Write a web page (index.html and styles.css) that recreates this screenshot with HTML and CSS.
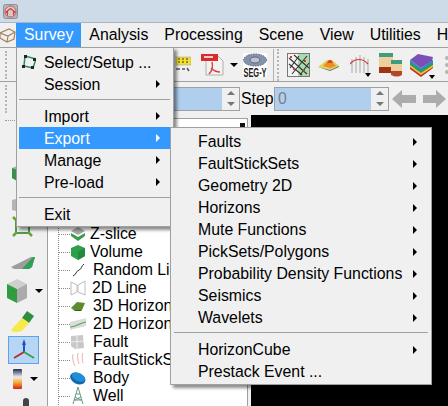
FILE: index.html
```html
<!DOCTYPE html>
<html lang="en">
<head>
    <meta charset="UTF-8" />
    <title>OpendTect</title>
    <link rel="stylesheet" href="styles.css">
</head>
<body>
    <header class="titlebar">
        <svg width="15" height="15" viewBox="0 0 15 15"><rect x="0.5" y="0.5" width="14" height="14" rx="2" fill="#b4b4b4" stroke="#909090"/><circle cx="7.5" cy="7.5" r="5.5" fill="#d8c8c8" stroke="#a86a6a"/><path d="M2.5 8.5l5-4 5 4M4.5 7.5v4M10.5 7.5v4" fill="none" stroke="#d83a3a" stroke-width="1.1"/></svg>
    </header>
    <nav class="menubar">
        <svg class="cubeicon" width="16" height="15" viewBox="0 0 16 15"><path d="M0 5l9-4 6 3-1 7-7 3-7-4z M0 5l8 3 7-4 M8 8l-1 6" fill="none" stroke="#a5835e" stroke-width="1.2"/></svg>
        <span class="menu-title active">Survey</span>
        <span class="menu-title">Analysis</span>
        <span class="menu-title">Processing</span>
        <span class="menu-title">Scene</span>
        <span class="menu-title">View</span>
        <span class="menu-title">Utilities</span>
        <span class="menu-title">Help</span>
    </nav>
    <div class="toolbar">
        <div class="grip"></div>
        <svg class="t-ruler" width="24" height="17" viewBox="0 0 24 17"><rect x="9" y="1" width="15" height="8" fill="#f4e02c" stroke="#999" stroke-width=".5"/><path d="M11 3h2M15 3h2M19 3h2M11 6h2M15 6h2M19 6h2" stroke="#333"/><path d="M9 13h4M15 13h3M20 12l2 3" stroke="#555" stroke-width="1.5"/></svg>
        <svg class="t-pdf" width="23" height="23" viewBox="0 0 23 23"><path d="M5 3h12l5 5v14H5z" fill="#f2f2f2" stroke="#b0b0b0"/><rect x="0" y="1" width="17" height="7" fill="#d92b2b"/><path d="M3 3h9v2H3z" fill="#f6caca"/><path d="M8 21c3-3 4-8 3-12M10 15c3 3 5 4 9 4" fill="none" stroke="#d83c3c" stroke-width="1.4"/></svg>
        <span class="drop-arrow t-arrow"></span>
        <svg class="t-segy" width="24" height="24" viewBox="0 0 24 24"><rect width="24" height="24" fill="#fff"/><ellipse cx="12" cy="7" rx="11.5" ry="6" fill="#8592ab" stroke="#4f5d78" stroke-dasharray="1.5 1"/><ellipse cx="12" cy="7" rx="5" ry="3" fill="#bcc4d4" stroke="#667"/><text class="segy-text" transform="translate(12 23.5) scale(.62 1)">SEG-Y</text></svg>
        <div class="handle"></div>
        <svg class="t-grid" width="23" height="24" viewBox="0 0 23 24"><rect x=".5" y=".5" width="22" height="23" fill="#a8dcae" stroke="#777"/><rect x="1" y="1" width="10" height="22" fill="#f4f4f4"/><path d="M2 5l18 16M7 2l15 13M2 11l13 11M20 3L5 21M12 3L3 15M22 10L13 22" stroke="#333" stroke-width="1.1"/><rect x="3" y="3" width="2" height="2" fill="#d33"/><rect x="17" y="7" width="2" height="2" fill="#d33"/><rect x="6" y="15" width="2" height="2" fill="#d33"/><rect x="16" y="17" width="2" height="2" fill="#d33"/></svg>
        <svg class="t-surface" width="21" height="12" viewBox="0 0 21 12"><path d="M0 8l9-7h5l7 6-9 4z" fill="#dcd54f"/><path d="M5 7l5-5h3l5 5-6 2z" fill="#ef8b2d"/><path d="M9 4l2-3h2l2 3z" fill="#e33b2e"/><path d="M0 8l12 3 9-4v1l-9 4z" fill="#6e6e6e"/></svg>
        <div class="t-wells">
            <svg width="19" height="21" viewBox="0 0 19 21"><path d="M2 5v14M6 3v16M10 1v18M14 3v16M18 5v14" stroke="#bdbdbd" stroke-width="1.4"/><path d="M0 10c5-6 13-6 18 0" fill="none" stroke="#d23a3a" stroke-width="1.2"/></svg>
            <span class="drop-arrow small"></span>
        </div>
        <svg class="t-section" width="24" height="24" viewBox="0 0 24 24"><path d="M1 0h14v4H1z" fill="#3f9c7c"/><path d="M1 4h14v10H1z" fill="#efcf9d"/><path d="M1 14h14v6H1z" fill="#9d3514"/><path d="M13 7h11v4H13z" fill="#3f9c7c"/><path d="M13 11h11v7H13z" fill="#efcf9d"/><path d="M13 18h11v4q-5 3-11 0z" fill="#b5462a"/></svg>
        <div class="t-wells t-stack">
            <svg width="23" height="24" viewBox="0 0 23 24"><path d="M0 13l11 8 12-8v2L11 24 0 16z" fill="#c62b2b"/><path d="M0 11l11 8 12-8v3L11 22 0 14z" fill="#f2c530"/><path d="M0 9l11 8 12-8v3L11 20 0 12z" fill="#2f9c4f"/><path d="M0 7l11 8 12-8v3L11 18 0 10z" fill="#2b8fb0"/><path d="M0 7l8-6 15 3-1 4-11 7z" fill="#7a50b8"/></svg>
            <span class="drop-arrow small"></span>
        </div>
        <svg class="t-dots" width="4" height="20" viewBox="0 0 4 20"><circle cx="3" cy="3" r="2" fill="#b5b5b5"/><circle cx="3" cy="10" r="2" fill="#b5b5b5"/><circle cx="3" cy="17" r="2" fill="#b5b5b5"/></svg>
    </div>
    <div class="sliderbar">
        <div class="grip"></div>
        <div class="spin first">
            <span class="spin-value"></span>
            <span class="spin-btns"><i class="up"></i><i class="down"></i></span>
        </div>
        <span class="step-label">Step</span>
        <div class="spin">
            <span class="spin-value">0</span>
            <span class="spin-btns"><i class="up"></i><i class="down"></i></span>
        </div>
        <svg class="nav-left" width="24" height="18" viewBox="0 0 24 18"><path d="M0 9L10 0v5h14v8H10v5z" fill="#acacac"/></svg>
        <svg class="nav-right" width="23" height="18" viewBox="0 0 23 18"><path d="M23 9L13 0v5H0v8h13v5z" fill="#acacac"/></svg>
    </div>
    <div class="workarea">
        <aside class="sidetools">
            <div class="side-grip"></div>
            <svg class="s-a" width="16" height="16" viewBox="0 0 16 16"><path d="M0 3l8-3 8 3v10l-8 3-8-3z" fill="#a8a8a8"/><path d="M0 3l5 2v11l-5-3z" fill="#3c8f4a"/></svg>
            <svg class="s-b" width="16" height="14" viewBox="0 0 16 14"><path d="M0 2l8-2 8 2v10l-8 2-8-2z" fill="#b5b5b5"/></svg>
            <svg class="s-box" width="21" height="21" viewBox="0 0 21 21"><rect x="4" y="4" width="13" height="13" fill="#e9f3e9" stroke="#4f9a4f" stroke-width="2"/><path d="M1 1l4 4M20 1l-4 4M1 20l4-4M20 20l-4-4" stroke="#6aa33c" stroke-width="2.5"/></svg>
            <svg class="s-slab" width="24" height="12" viewBox="0 0 24 12"><path d="M0 10L20 0h4l-3 10-3 2H3z" fill="#9d9d9d"/><path d="M11 12L22 0h2l-3 10-3 2z" fill="#2fa056"/></svg>
            <div class="side-row s-cube"><svg width="20" height="24" viewBox="0 0 20 24"><path d="M0 5l10-5 10 5-10 5z" fill="#cfcfcf"/><path d="M0 5l10 5v14L0 19z" fill="#2f9c3f"/><path d="M20 5l-10 5v14l10-5z" fill="#ababab"/></svg><span class="drop-arrow"></span></div>
            <svg class="s-flash" width="24" height="22" viewBox="0 0 24 22"><path d="M16 0l7 5-5 7-7-5z" fill="#2f8f3f"/><path d="M11 7l7 5-7 8C5 22 0 21 0 19z" fill="#f6e94a"/></svg>
            <div class="axis-btn"><svg width="24" height="24" viewBox="0 0 24 24"><path d="M12 14V4" stroke="#2257b5" stroke-width="2"/><path d="M10 7l2-6 2 6z" fill="#2257b5"/><path d="M12 14L2 20" stroke="#b03030" stroke-width="2"/><path d="M12 14l10 6" stroke="#3c9c55" stroke-width="2"/></svg></div>
            <div class="side-row s-ramp"><svg width="9" height="20" viewBox="0 0 9 20"><defs><linearGradient id="ramp" x1="0" y1="0" x2="0" y2="1"><stop offset="0" stop-color="#222a55"/><stop offset=".4" stop-color="#eee"/><stop offset=".7" stop-color="#f3a12c"/><stop offset="1" stop-color="#d41f1f"/></linearGradient></defs><rect width="9" height="20" rx="1" fill="url(#ramp)"/></svg><span class="drop-arrow"></span></div>
            <svg class="s-lock" width="10" height="8" viewBox="0 0 10 8"><path d="M2 8V3a3 3 0 0 1 6 0v5z" fill="#444"/></svg>
        </aside>
        <section class="tree">
            <div class="tree-head"><span></span></div>
            <div class="tree-list">
                <div class="tree-row near"><svg width="16" height="16" viewBox="0 0 16 16"><path d="M1 5l7-4 7 4-7 4z" fill="#a8a8a8"/><path d="M1 7l7 4 7-4v3l-7 5-7-5z" fill="#3c9c4a"/></svg>Z-slice</div>
                <div class="tree-row near"><svg width="16" height="16" viewBox="0 0 16 16"><path d="M8 1l7 3v8l-7 4-7-4V4z" fill="#2fa04a"/><path d="M8 8l7-4v8l-7 4z" fill="#238a3c"/></svg>Volume</div>
                <div class="tree-row"><svg width="16" height="16" viewBox="0 0 16 16"><path d="M3 14c3-1 3-5 6-6s2-4 5-6" fill="none" stroke="#333"/></svg>Random Line</div>
                <div class="tree-row mid"><svg width="16" height="16" viewBox="0 0 16 16"><path d="M1 2l6 3v7l-6 3zM15 1L8 5v7l7 3z" fill="none" stroke="#bbb"/></svg>2D Line</div>
                <div class="tree-row"><svg width="16" height="16" viewBox="0 0 16 16"><path d="M1 10l6-6 8 1-3 7H5z" fill="#5c8c2c"/><path d="M1 10l4 2h7l-1 1H5z" fill="#37591a"/></svg>3D Horizon</div>
                <div class="tree-row"><svg width="16" height="16" viewBox="0 0 16 16"><path d="M0 6l16-4v8L0 14z" fill="#dcdcdc"/><path d="M0 11c6 0 9-4 16-5" fill="none" stroke="#57a35a" stroke-width="1.2"/></svg>2D Horizon</div>
                <div class="tree-row"><svg width="16" height="16" viewBox="0 0 16 16"><path d="M1 2l12-1 1 13-9 1-4-3z" fill="#c8c8c8"/><path d="M7 1v14M1 8l13-1" stroke="#eee"/></svg>Fault</div>
                <div class="tree-row"><svg width="16" height="16" viewBox="0 0 16 16"><path d="M3 2c-1 4 0 8 2 12M8 1c-1 4 0 8 1 11M13 1c-1 3-1 6 0 10" fill="none" stroke="#efb0b0"/></svg>FaultStickSets</div>
                <div class="tree-row"><svg width="16" height="16" viewBox="0 0 16 16"><ellipse cx="8" cy="8.5" rx="8" ry="5.5" transform="rotate(25 8 8)" fill="#1468ad"/><ellipse cx="8" cy="7" rx="7" ry="4" transform="rotate(25 8 8)" fill="#1f8fd8"/></svg>Body</div>
                <div class="tree-row"><svg width="16" height="18" viewBox="0 0 16 18"><path d="M8 0L3 17M8 0l5 17M4 13h8M6 7h4M5 10l6 3M11 10l-6 3" fill="none" stroke="#6a9a80"/></svg>Well</div>
            </div>
        </section>
        <div class="canvas"></div>
    </div>

    <div class="popup survey-menu">
        <div class="item"><svg class="item-icon" width="14" height="14" viewBox="0 0 14 14"><path d="M3 1l11 3-3 9-9-2z" fill="none" stroke="#2f8f5f" stroke-width="1.5"/><g fill="#222"><rect x="2" y="0" width="3" height="3"/><rect x="11" y="3" width="3" height="3"/><rect x="9" y="11" width="3" height="3"/><rect x="0" y="10" width="3" height="3"/></g></svg>Select/Setup ...</div>
        <div class="item sub">Session</div>
        <div class="sep"></div>
        <div class="item sub">Import</div>
        <div class="item sub selected">Export</div>
        <div class="item sub">Manage</div>
        <div class="item sub">Pre-load</div>
        <div class="sep"></div>
        <div class="item">Exit</div>
    </div>

    <div class="popup export-menu">
        <div class="item sub">Faults</div>
        <div class="item sub">FaultStickSets</div>
        <div class="item sub">Geometry 2D</div>
        <div class="item sub">Horizons</div>
        <div class="item sub">Mute Functions</div>
        <div class="item sub">PickSets/Polygons</div>
        <div class="item sub">Probability Density Functions</div>
        <div class="item sub">Seismics</div>
        <div class="item sub">Wavelets</div>
        <div class="sep"></div>
        <div class="item sub">HorizonCube</div>
        <div class="item">Prestack Event ...</div>
    </div>
</body>
</html>
```

FILE: styles.css
```css
html {
    font: 15.85px/1.2 "Liberation Sans", Arial, sans-serif;
}

body {
    margin: 0;
    width: 448px;
    height: 406px;
    overflow: hidden;
    position: relative;
    background-color: #f0f0f0;
    color: #000;
}

svg {
    flex: none;
    display: block;
}

.titlebar {
    display: flex;
    align-items: center;
    box-sizing: border-box;
    height: 23px;
    padding: 0 3px;
    background-color: #cddbe9;
    border-bottom: 1px solid #a9b5c0;
}

.menubar {
    display: flex;
    align-items: center;
    height: 24px;
    overflow: hidden;
}

.menu-title {
    flex: none;
    padding: 3px 8px;
    line-height: 18px;
}

.menu-title.active {
    background-color: #3399ff;
    color: #fff;
}

.toolbar {
    display: flex;
    align-items: center;
    box-sizing: border-box;
    height: 35px;
    padding-left: 5px;
    border-top: 1px solid #a0a0a0;
    border-bottom: 1px solid #a0a0a0;
    overflow: hidden;
}

.grip {
    flex: none;
    width: 1px;
    height: 28px;
    border-left: 2px dotted #b5b5b5;
}

.t-ruler {
    margin-left: auto;
}

.t-pdf {
    margin-left: 10px;
}

.t-arrow {
    margin-left: 6px;
}

.t-segy {
    margin-left: 5px;
}

.handle {
    flex: none;
    width: 3px;
    height: 32px;
    margin-left: 6px;
    border-left: 1px solid #b0b0b0;
    border-right: 2px dotted #b5b5b5;
}

.t-grid {
    margin-left: 8px;
}

.t-surface {
    margin-left: 8px;
}

.t-wells {
    position: relative;
    flex: none;
    margin-left: 11px;
}

.t-section {
    margin-left: 9px;
}

.t-stack {
    margin-left: 8px;
}

.t-dots {
    margin-left: 11px;
}

.segy-text {
    font: bold 12px "Liberation Sans", sans-serif;
    text-anchor: middle;
    fill: #222;
}

.drop-arrow {
    flex: none;
    width: 0;
    height: 0;
    border-left: 4px solid transparent;
    border-right: 4px solid transparent;
    border-top: 4px solid #000;
}

.drop-arrow.small {
    position: absolute;
    right: -2px;
    bottom: -2px;
    border-left-width: 3px;
    border-right-width: 3px;
}

.sliderbar {
    display: flex;
    align-items: center;
    box-sizing: border-box;
    height: 33px;
    padding: 0 2px 0 5px;
    white-space: nowrap;
}

.step-label {
    width: 33px;
    margin-left: 1px;
}

.spin {
    display: flex;
    flex: none;
    box-sizing: border-box;
    width: 115px;
    height: 24px;
    border: 1px solid #a0a0a0;
    background-color: #b0cfee;
}

.spin.first {
    width: 140px;
    margin-left: auto;
}

.spin-value {
    flex: 1;
    padding-left: 3px;
    line-height: 22px;
    color: #808080;
}

.spin-btns {
    display: flex;
    flex-direction: column;
    flex: none;
    width: 17px;
    background-color: #f0f0f0;
}

.spin-btns i {
    flex: 1;
    position: relative;
}

.spin-btns i::after {
    content: "";
    position: absolute;
    left: 5px;
    top: 3px;
    border-left: 4px solid transparent;
    border-right: 4px solid transparent;
}

.spin-btns .up::after {
    border-bottom: 4px solid #777;
}

.spin-btns .down::after {
    border-top: 4px solid #777;
}

.nav-left {
    margin-left: 3px;
}

.nav-right {
    margin-left: 7px;
}

.workarea {
    display: flex;
    height: 291px;
    overflow: hidden;
}

.sidetools {
    flex: none;
    display: flex;
    flex-direction: column;
    align-items: flex-start;
    box-sizing: border-box;
    width: 48px;
    border-right: 1px solid #a0a0a0;
}

.side-grip {
    width: 10px;
    margin: 5px 0 0 5px;
    border-top: 1px dotted #999;
}

.s-a {
    margin: 44px 0 0 12px;
}

.s-b {
    margin: 17px 0 0 12px;
}

.s-box {
    margin: 4px 0 0 12px;
}

.s-slab {
    margin: 20px 0 0 11px;
}

.s-cube {
    margin: 10px 0 0 7px;
}

.s-flash {
    margin: 8px 0 0 11px;
}

.s-ramp {
    margin: 5px 0 0 13px;
    gap: 13px;
}

.s-lock {
    margin: 9px 0 0 21px;
}

.side-row {
    display: flex;
    align-items: center;
    gap: 8px;
}

.axis-btn {
    display: flex;
    align-items: center;
    justify-content: center;
    box-sizing: border-box;
    width: 31px;
    height: 30px;
    margin: 3px 0 0 8px;
    border: 1px solid #5ba3ee;
    background-color: #b7d5f5;
}

.tree {
    flex: none;
    display: flex;
    flex-direction: column;
    box-sizing: border-box;
    width: 200px;
    margin-top: 3px;
    padding: 0 0 1px 10px;
    border-top: 1px solid #a0a0a0;
    border-right: 1px solid #a0a0a0;
    background-color: #fff;
    white-space: nowrap;
    overflow: hidden;
}

.tree-head {
    display: flex;
    justify-content: flex-end;
    margin-bottom: auto;
    padding: 4px 2px 0 0;
}

.tree-head span {
    width: 5px;
    height: 6px;
    background-color: #111;
}

.tree-list {
    border-left: 1px dotted #888;
}

.tree-row {
    display: flex;
    align-items: center;
    gap: 7px;
    height: 18px;
    line-height: 18px;
}

.tree-row::before {
    content: "";
    flex: none;
    width: 11px;
    margin-right: -7px;
    border-top: 1px dotted #888;
}

.tree-row.near {
    gap: 4px;
}

.tree-row.near::before {
    margin-right: -4px;
}

.tree-row.mid {
    gap: 6px;
}

.tree-row.mid::before {
    margin-right: -6px;
}

.canvas {
    flex: 1;
    margin-left: 3px;
    background-color: #000;
}

.popup {
    position: absolute;
    box-sizing: border-box;
    border: 1px solid #a0a0a0;
    background-color: #f0f0f0;
    box-shadow: 3px 3px 3px rgba(0, 0, 0, 0.45);
}

.survey-menu {
    left: 16px;
    top: 47px;
    width: 158px;
    height: 180px;
    padding: 3px 3px 1px 2px;
}

.survey-menu .item {
    line-height: 24px;
}

.export-menu {
    left: 170px;
    top: 127px;
    width: 262px;
    height: 258px;
    padding: 3px 2px 2px;
}

.item {
    position: relative;
    height: 22px;
    padding-left: 25px;
    line-height: 22px;
    white-space: nowrap;
}

.item.selected {
    background-color: #3399ff;
    color: #fff;
}

.item.sub::after {
    content: "";
    position: absolute;
    right: 10px;
    top: 7px;
    border-top: 4px solid transparent;
    border-bottom: 4px solid transparent;
    border-left: 4px solid #000;
}

.export-menu .item.sub::after {
    right: 12px;
}

.item.selected::after {
    border-left-color: #fff;
}

.item-icon {
    position: absolute;
    left: 3px;
    top: 4px;
}

.sep {
    height: 1px;
    margin: 4px 0 5px;
    background-color: #a0a0a0;
}

.export-menu .sep {
    margin: 3px 1px 6px;
}
```
